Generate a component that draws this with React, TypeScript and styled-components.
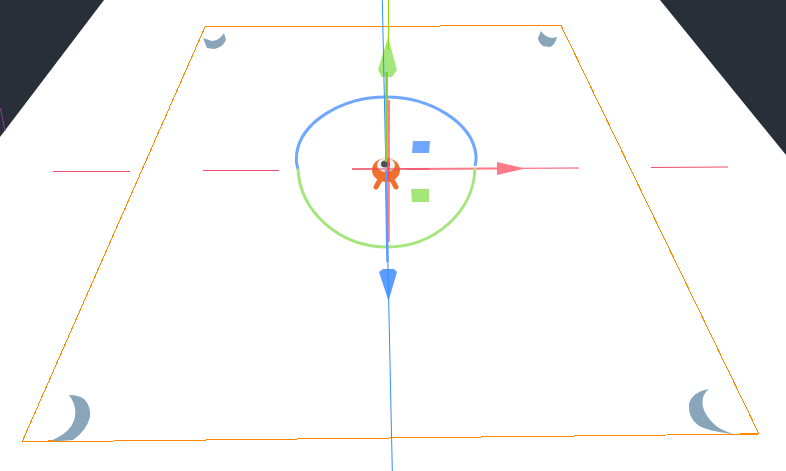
import React from 'react';
import styled, { createGlobalStyle } from 'styled-components';

const GlobalStyle = createGlobalStyle`
  html, body {
    margin: 0;
    padding: 0;
    background: #fff;
    overflow: hidden;
  }
`
const Viewport = styled.main`
  width: 786px;
  height: 471px;
  background: #fff;
  overflow: hidden;
`
const Canvas = styled.svg`
  display: block;
  width: 100%;
  height: 100%;
`

const Floor = () => (
  <g>
    <polygon points="0,0 104,0 0,137" fill="#282f38" />
    <polygon points="660,0 786,0 786,155" fill="#282f38" />
    <line x1="0.5" y1="108" x2="5" y2="131" stroke="#8a3f8f" strokeWidth="1" />
  </g>
)

const Marks = () => (
  <g fill="#88a5b9">
    <path d="M203 38 L212 41 Q220 40 224 33 L226 40 Q222 48 214 49 L207 48 Z" />
    <path d="M541 31 Q545 37 552 38 L557 37 Q555 45 550 47 L543 46 Q538 42 538 38 Z" />
    <path d="M69 395 Q80 395 85 400 Q91 407 90 417 Q87 430 73 440 L48 442 Q66 435 72 425 Q80 410 69 395 Z" />
    <path d="M709 389 Q692 392 689 404 Q688 418 698 425 Q706 431 733 434 Q718 429 713 423 Q700 410 703 398 Q704 393 709 389 Z" />
  </g>
)

const Outline = () => (
  <g stroke="#ff8800" strokeWidth="1" fill="none" shapeRendering="crispEdges">
    <path d="M205 27 L561 25.5 L759 434 L22 442 Z" />
    <line x1="450" y1="25.5" x2="458" y2="25.5" strokeWidth="1.5" />
    <line x1="740" y1="434" x2="758" y2="434" strokeWidth="1.5" />
    <line x1="48" y1="441" x2="54" y2="441" strokeWidth="1.5" />
  </g>
)

const RedAxis = () => (
  <g>
    <g stroke="#f0506a" strokeWidth="1">
      <line x1="53" y1="171.5" x2="130" y2="171.5" />
      <line x1="203" y1="170.5" x2="279" y2="170.5" />
      <line x1="352" y1="169" x2="579" y2="168" />
      <line x1="651" y1="167.5" x2="728" y2="167" />
    </g>
    <line x1="406" y1="169" x2="500" y2="168.5" stroke="#ff7a88" strokeWidth="2" />
    <polygon points="525,168.5 497,162 497,175" fill="#ff7a88" />
  </g>
)

const Gizmo = () => (
  <g fill="none">
    <path d="M298 169 Q295.500 162 296.500 155 C300 122 342 97 386 97 C430 97 472 122 476 155 Q476.500 161 475 166" stroke="#70a8ff" strokeWidth="3" />
    <path d="M298 169 C300 212 340 247 387 247 C434 247 474 212 475 168" stroke="#a5e67a" strokeWidth="3" />

    <polygon points="388,37 397,70 392,77 382,77 378,70" fill="#a5e67a" />
    <polygon points="388.500,301 397,272 394,269 383,269 379,272" fill="#5b9cff" />
    <polygon points="413,141 430,141 429,153 412,153" fill="#70a8ff" />
    <polygon points="411,189 429,189 429,202 412,202" fill="#a5e67a" />

    <line x1="382.300" y1="0" x2="392.300" y2="471" stroke="#2f90ff" strokeWidth="1" />
    <line x1="388.500" y1="0" x2="388.500" y2="50" stroke="#88dd00" strokeWidth="1" />
    <line x1="388.700" y1="100" x2="388.500" y2="242" stroke="#ff7a88" strokeWidth="2.500" />
    <line x1="386.700" y1="72" x2="386.200" y2="158" stroke="#88cc22" strokeWidth="2.500" />
    <line x1="386" y1="170" x2="387.500" y2="262" stroke="#5b9cff" strokeWidth="2.500" />
  </g>
)

const Robot = () => (
  <g>
    <g stroke="#f0702e" strokeWidth="5" strokeLinecap="round">
      <line x1="381" y1="178" x2="376" y2="187" />
      <line x1="391" y1="178" x2="396" y2="187" />
    </g>
    <ellipse cx="386" cy="170" rx="14" ry="12" fill="#f0702e" />
    <ellipse cx="386" cy="165" rx="9" ry="7" fill="#e8f3ee" />
    <ellipse cx="385.500" cy="164" rx="4.500" ry="3.500" fill="#4a4f52" />
    <line x1="388.500" y1="158" x2="388.500" y2="181" stroke="#f9505e" strokeWidth="2.500" />
    <line x1="386" y1="156" x2="386" y2="162" stroke="#88cc22" strokeWidth="2" />
    <line x1="386" y1="170" x2="386" y2="181" stroke="#5b9cff" strokeWidth="2" />
    <line x1="352" y1="169" x2="429" y2="169" stroke="#e8405c" strokeWidth="1" />
  </g>
)

const App = () => {
  return (
    <Viewport>
      <GlobalStyle />
      <Canvas viewBox="0 0 786 471">
        <Floor />
        <Marks />
        <Outline />
        <RedAxis />
        <Gizmo />
        <Robot />
      </Canvas>
    </Viewport>
  )
};
export default App
